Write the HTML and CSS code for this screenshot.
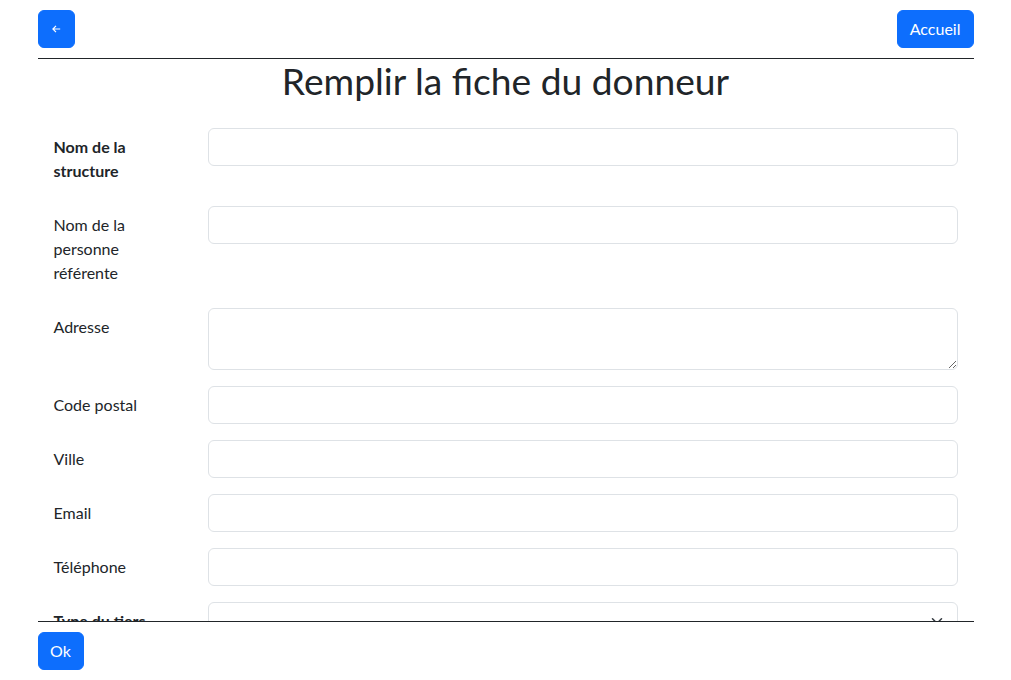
FILE: index.html
```html
<!DOCTYPE html>
<html lang="fr">
<head>
<meta charset="utf-8">
<title>Remplir la fiche du donneur</title>
<link rel="stylesheet" href="styles.css">
</head>
<body>
<div class="page">
  <header class="topbar">
    <button class="btn btn-back" type="button" aria-label="Retour">
      <svg width="9" height="8" viewBox="0 0 9 8" aria-hidden="true"><path d="M4 0.8 L0.9 4 L4 7.2 M1 4 H8.2" fill="none" stroke="#fff" stroke-width="1.2"/></svg>
    </button>
    <button class="btn" type="button">Accueil</button>
  </header>
  <main class="scroll">
    <h1 class="title">Remplir la fiche du donneur</h1>
    <form class="form">
      <div class="row">
        <label class="label bold">Nom de la structure</label>
        <div class="field"><input class="control" type="text"></div>
      </div>
      <div class="row">
        <label class="label">Nom de la personne référente</label>
        <div class="field"><input class="control" type="text"></div>
      </div>
      <div class="row">
        <label class="label">Adresse</label>
        <div class="field"><textarea class="control area" rows="2"></textarea></div>
      </div>
      <div class="row">
        <label class="label">Code postal</label>
        <div class="field"><input class="control" type="text"></div>
      </div>
      <div class="row">
        <label class="label">Ville</label>
        <div class="field"><input class="control" type="text"></div>
      </div>
      <div class="row">
        <label class="label">Email</label>
        <div class="field"><input class="control" type="email"></div>
      </div>
      <div class="row">
        <label class="label">Téléphone</label>
        <div class="field"><input class="control" type="tel"></div>
      </div>
      <div class="row">
        <label class="label bold">Type du tiers</label>
        <div class="field">
          <div class="select">
            <span class="chev"><svg width="16" height="12" viewBox="0 0 16 16" aria-hidden="true"><path d="M2 5l6 6 6-6" fill="none" stroke="#343a40" stroke-width="2" stroke-linecap="round" stroke-linejoin="round"/></svg></span>
          </div>
        </div>
      </div>
      <div class="row">
        <label class="label">Montant</label>
        <div class="field"><input class="control" type="text"></div>
      </div>
    </form>
  </main>
  <footer class="bottombar">
    <button class="btn" type="button">Ok</button>
  </footer>
</div>
</body>
</html>
```
FILE: styles.css
```css
* { box-sizing: border-box; }
html, body { margin: 0; padding: 0; }
body {
  font-family: Lato, "Noto Sans", sans-serif;
  font-size: 16px;
  line-height: 24px;
  color: #212529;
  background: #fff;
}
.page {
  width: 936px;
  margin: 0 auto;
  height: 100vh;
  display: flex;
  flex-direction: column;
}
.topbar {
  display: flex;
  justify-content: space-between;
  align-items: center;
  padding: 10px 0;
  border-bottom: 1px solid #212529;
}
.btn {
  height: 38px;
  padding: 6px 12px;
  border: 1px solid #0d6efd;
  background: #0d6efd;
  color: #fff;
  font-family: inherit;
  font-size: 16px;
  line-height: 24px;
  border-radius: 6px;
  display: inline-flex;
  align-items: center;
  justify-content: center;
}
.btn-back { width: 37px; padding: 0; }
.scroll {
  flex: 1;
  overflow: hidden;
  border-bottom: 1px solid #212529;
}
.title {
  margin: 0 0 8px;
  text-align: center;
  font-size: 37.2px;
  line-height: 44.6px;
  font-weight: 400;
}
.form { padding: 16px; }
.row {
  display: grid;
  grid-template-columns: 130.7px 1fr;
  column-gap: 24px;
  margin-bottom: 16px;
}
.label {
  padding-top: 7px;
  padding-bottom: 7px;
}
.bold { font-weight: 700; }
.control {
  display: block;
  width: 100%;
  height: 38px;
  padding: 6px 12px;
  border: 1px solid #dee2e6;
  border-radius: 6px;
  font: inherit;
  color: #212529;
  background: #fff;
}
.area { height: 62px; resize: vertical; }
.select {
  position: relative;
  height: 38px;
  border: 1px solid #dee2e6;
  border-radius: 6px;
}
.chev {
  position: absolute;
  right: 12px;
  top: 12px;
  display: flex;
}
.bottombar {
  padding: 10px 0;
}
.bottombar .btn { width: 46px; padding: 0; }
```
